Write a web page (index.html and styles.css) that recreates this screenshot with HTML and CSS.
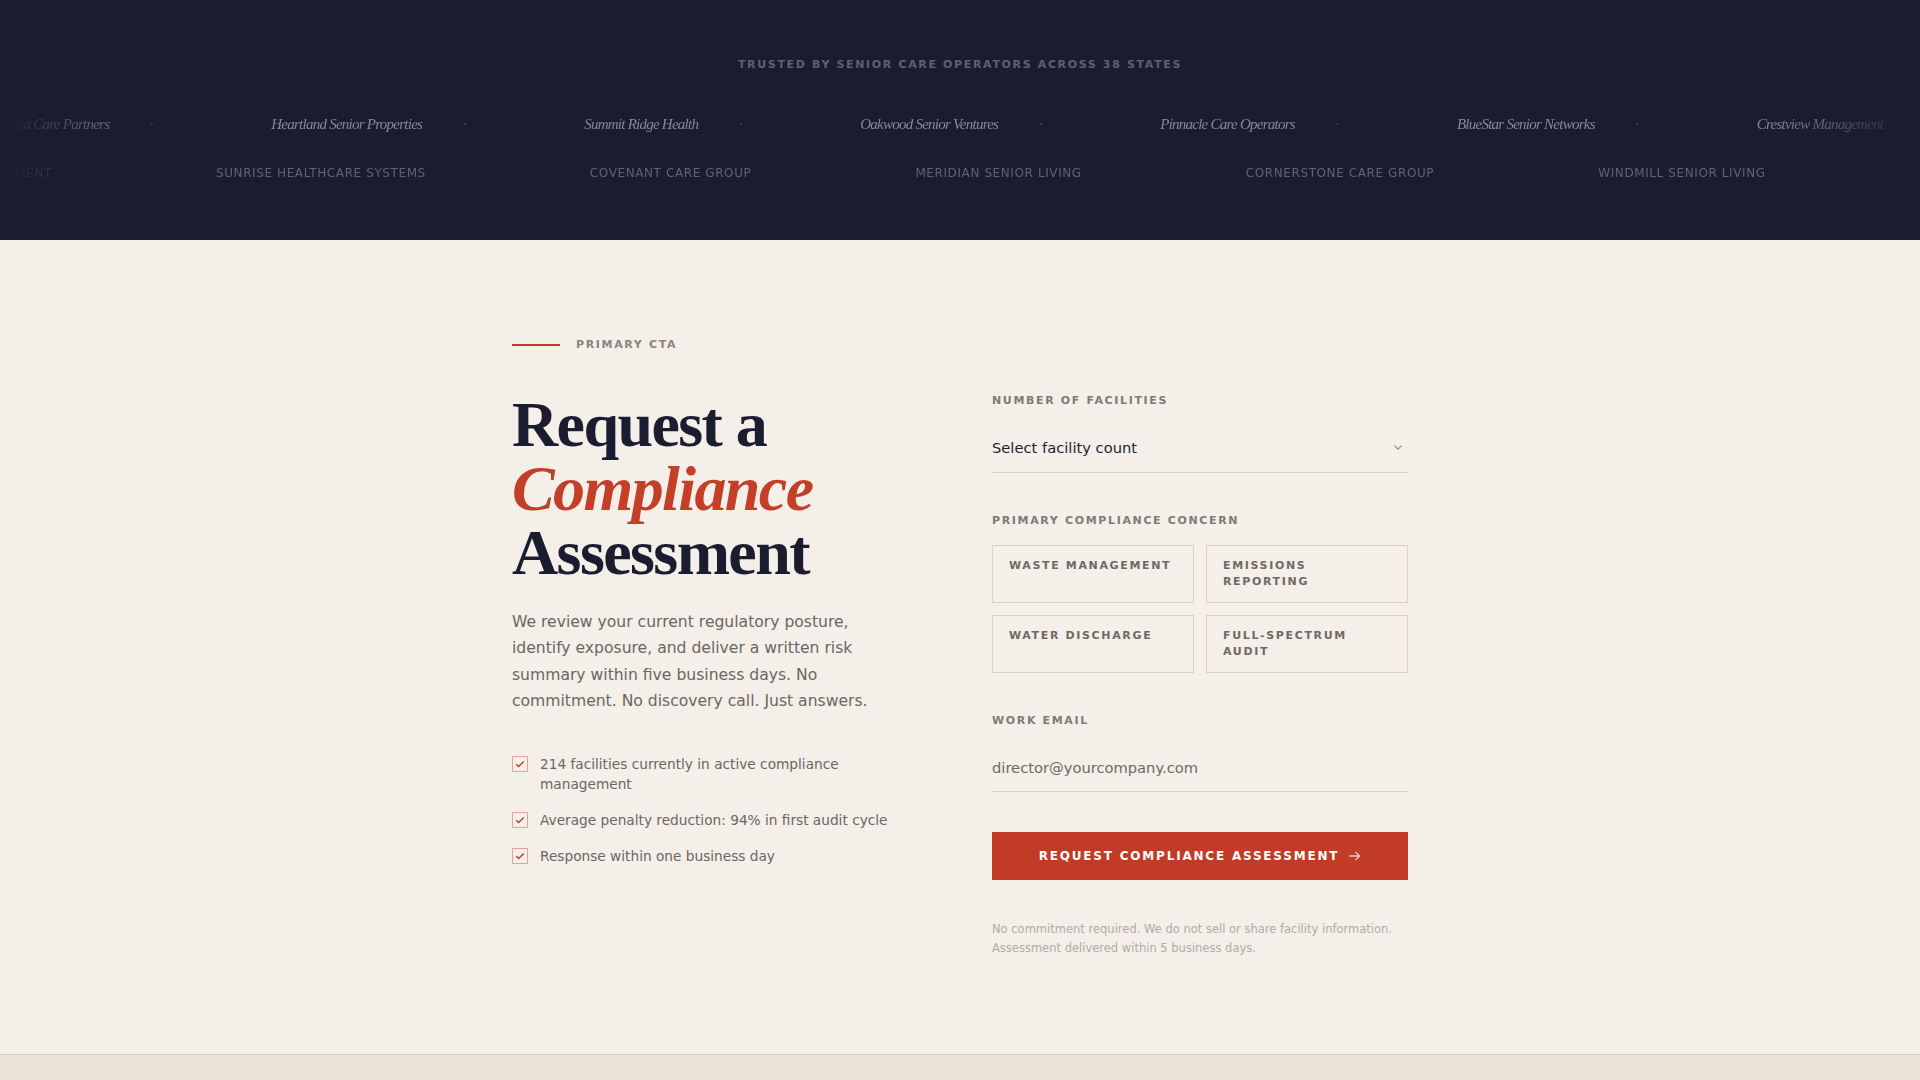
FILE: index.html
```html
<!DOCTYPE html>
<html lang="en">
<head>
  <meta charset="UTF-8">
  <meta name="viewport" content="width=device-width, initial-scale=1.0">
  <title>Request a Compliance Assessment</title>
  <link rel="stylesheet" href="styles.css">
</head>
<body>
  <section class="trust">
    <p class="trust-label">Trusted by senior care operators across 38 states</p>

    <div class="marquee">
      <div class="marquee-track track-serif">
        <span class="logo-serif">Magnolia Care Partners</span><span class="sep">·</span>
        <span class="logo-serif">Heartland Senior Properties</span><span class="sep">·</span>
        <span class="logo-serif">Summit Ridge Health</span><span class="sep">·</span>
        <span class="logo-serif">Oakwood Senior Ventures</span><span class="sep">·</span>
        <span class="logo-serif">Pinnacle Care Operators</span><span class="sep">·</span>
        <span class="logo-serif">BlueStar Senior Networks</span><span class="sep">·</span>
        <span class="logo-serif">Crestview Management</span><span class="sep">·</span>
        <span class="logo-serif">Magnolia Care Partners</span><span class="sep">·</span>
      </div>
    </div>

    <div class="marquee">
      <div class="marquee-track track-caps">
        <span class="logo-caps">Harborview Management</span>
        <span class="logo-caps">Sunrise Healthcare Systems</span>
        <span class="logo-caps">Covenant Care Group</span>
        <span class="logo-caps">Meridian Senior Living</span>
        <span class="logo-caps">Cornerstone Care Group</span>
        <span class="logo-caps">Windmill Senior Living</span>
        <span class="logo-caps">Harborview Management</span>
      </div>
    </div>
  </section>

  <section class="cta">
    <div class="cta-inner">
      <div class="eyebrow"><span class="eyebrow-line"></span>Primary CTA</div>

      <div class="cta-grid">
        <div class="cta-copy">
          <h1 class="cta-title">Request a<br><em>Compliance</em><br>Assessment</h1>
          <p class="cta-lead">We review your current regulatory posture, identify exposure, and deliver a written risk summary within five business days. No commitment. No discovery call. Just answers.</p>

          <ul class="checklist">
            <li>
              <span class="check"><svg width="10" height="10" viewBox="0 0 10 10"><path d="M1.2 5.3l2.4 2.3L8.8 2.4" fill="none" stroke="#c13b27" stroke-width="1.4"/></svg></span>
              214 facilities currently in active compliance management
            </li>
            <li>
              <span class="check"><svg width="10" height="10" viewBox="0 0 10 10"><path d="M1.2 5.3l2.4 2.3L8.8 2.4" fill="none" stroke="#c13b27" stroke-width="1.4"/></svg></span>
              Average penalty reduction: 94% in first audit cycle
            </li>
            <li>
              <span class="check"><svg width="10" height="10" viewBox="0 0 10 10"><path d="M1.2 5.3l2.4 2.3L8.8 2.4" fill="none" stroke="#c13b27" stroke-width="1.4"/></svg></span>
              Response within one business day
            </li>
          </ul>
        </div>

        <form class="cta-form" onsubmit="return false">
          <div class="field">
            <label class="field-label" for="facilities">Number of facilities</label>
            <div class="select-wrap">
              <select id="facilities">
                <option>Select facility count</option>
                <option>1 – 5</option>
                <option>6 – 20</option>
                <option>21 – 50</option>
                <option>50+</option>
              </select>
              <svg width="8" height="5" viewBox="0 0 8 5"><path d="M0.5 0.6L4 4.1L7.5 0.6" fill="none" stroke="#8a857f" stroke-width="1.1"/></svg>
            </div>
          </div>

          <div class="field">
            <span class="field-label">Primary compliance concern</span>
            <div class="options">
              <label class="option"><input type="radio" name="concern">Waste management</label>
              <label class="option"><input type="radio" name="concern">Emissions reporting</label>
              <label class="option"><input type="radio" name="concern">Water discharge</label>
              <label class="option"><input type="radio" name="concern">Full-spectrum audit</label>
            </div>
          </div>

          <div class="field">
            <label class="field-label" for="email">Work email</label>
            <input class="text-input" id="email" type="email" placeholder="director@yourcompany.com">
          </div>

          <button class="submit" type="submit">
            Request compliance assessment
            <svg width="12" height="10" viewBox="0 0 12 10"><path d="M0.5 5h10M6.5 1l4 4-4 4" fill="none" stroke="currentColor" stroke-width="1.3"/></svg>
          </button>

          <p class="fine-print">No commitment required. We do not sell or share facility information. Assessment delivered within 5 business days.</p>
        </form>
      </div>
    </div>
  </section>

  <footer class="site-footer"></footer>
</body>
</html>
```

FILE: styles.css
```css
* {
  box-sizing: border-box;
}
body {
  margin: 0;
  font-family: "DejaVu Sans", sans-serif;
  background: #f4efe9;
  color: #1c1d31;
}

/* logo strip */
.trust {
  background: #1b1c2e;
  padding: 57px 0 55px;
  text-align: center;
  overflow: hidden;
}
.trust-label {
  margin: 0 0 39px;
  font-size: 11px;
  line-height: 16px;
  font-weight: 700;
  letter-spacing: 0.15em;
  text-transform: uppercase;
  color: #5e6073;
}
.marquee {
  overflow: hidden;
  -webkit-mask-image: linear-gradient(90deg, transparent 0, #000 8%, #000 92%, transparent 100%);
  mask-image: linear-gradient(90deg, transparent 0, #000 8%, #000 92%, transparent 100%);
}
.marquee + .marquee {
  margin-top: 25px;
}
.marquee-track {
  display: flex;
  align-items: center;
  width: max-content;
  white-space: nowrap;
}
.track-serif {
  transform: translateX(-22px);
}
.track-caps {
  gap: 164px;
  transform: translateX(-133px);
}
.logo-serif {
  font-family: "Liberation Serif", serif;
  font-style: italic;
  font-size: 15px;
  line-height: 24px;
  letter-spacing: -0.05em;
  color: #87889a;
}
.sep {
  margin: 0 117px 0 40px;
  font-family: "Liberation Serif", serif;
  font-size: 15px;
  line-height: 24px;
  color: #4a4b5d;
}
.logo-caps {
  font-size: 12px;
  line-height: 24px;
  letter-spacing: 0.05em;
  text-transform: uppercase;
  color: #616375;
}

/* assessment request */
.cta {
  padding: 97px 0 96px;
}
.cta-inner {
  max-width: 896px;
  margin: 0 auto;
}
.eyebrow {
  display: flex;
  align-items: center;
  gap: 16px;
  margin-bottom: 40px;
  font-size: 11px;
  line-height: 16px;
  font-weight: 700;
  letter-spacing: 0.15em;
  text-transform: uppercase;
  color: #8a847d;
}
.eyebrow-line {
  width: 48px;
  height: 2px;
  background: #c13b27;
}
.cta-grid {
  display: grid;
  grid-template-columns: 1fr 1fr;
  gap: 64px;
  align-items: start;
}
.cta-title {
  margin: 0;
  font-family: "Liberation Serif", serif;
  font-size: 64px;
  line-height: 1;
  font-weight: 700;
  letter-spacing: -0.025em;
  color: #1b1c30;
}
.cta-title em {
  color: #c33f28;
}
.cta-lead {
  max-width: 384px;
  margin: 24px 0 0;
  font-size: 15.6px;
  line-height: 26.4px;
  color: #6b6661;
}
.checklist {
  list-style: none;
  margin: 39px 0 0;
  padding: 0;
  display: flex;
  flex-direction: column;
  gap: 16px;
}
.checklist li {
  display: flex;
  align-items: flex-start;
  gap: 12px;
  font-size: 13.7px;
  line-height: 20px;
  color: #6b6661;
}
.check {
  flex: none;
  width: 16px;
  height: 16px;
  margin-top: 2px;
  border: 1px solid #e2a597;
  display: flex;
  align-items: center;
  justify-content: center;
}

/* form */
.field {
  margin-bottom: 40px;
}
.field-label {
  display: block;
  margin-bottom: 16px;
  font-size: 11px;
  line-height: 16px;
  font-weight: 700;
  letter-spacing: 0.15em;
  text-transform: uppercase;
  color: #7f7a74;
}
.select-wrap {
  display: flex;
  align-items: center;
  padding-bottom: 2px;
  border-bottom: 1px solid #d8d2c9;
}
.select-wrap select {
  flex: 1;
  height: 45px;
  padding: 0;
  border: 0;
  background: transparent;
  -webkit-appearance: none;
  appearance: none;
  font-family: inherit;
  font-size: 14.7px;
  color: #1e1f2f;
  outline: none;
}
.select-wrap svg {
  margin-right: 6px;
}
.options {
  display: grid;
  grid-template-columns: 1fr 1fr;
  gap: 12px;
}
.option {
  display: block;
  padding: 12px 16px;
  border: 1px solid #d8d2c9;
  font-size: 11px;
  line-height: 16px;
  font-weight: 700;
  letter-spacing: 0.15em;
  text-transform: uppercase;
  color: #6e6964;
  cursor: pointer;
}
.option input {
  display: none;
}
.text-input {
  display: block;
  width: 100%;
  height: 47px;
  padding: 0 0 2px;
  border: 0;
  border-bottom: 1px solid #d8d2c9;
  background: transparent;
  font-family: inherit;
  font-size: 14.7px;
  color: #1e1f2f;
  outline: none;
}
.text-input::placeholder {
  color: #6e6964;
}
.submit {
  width: 100%;
  display: flex;
  align-items: center;
  justify-content: center;
  gap: 10px;
  padding: 16px 24px;
  border: 0;
  background: #c13b27;
  color: #fff;
  font-family: inherit;
  font-size: 12px;
  line-height: 16px;
  font-weight: 700;
  letter-spacing: 0.15em;
  text-transform: uppercase;
  cursor: pointer;
}
.submit svg {
  color: rgba(255, 255, 255, 0.75);
}
.fine-print {
  margin: 40px 0 0;
  font-size: 11.5px;
  line-height: 19px;
  color: #b1aba4;
}

.site-footer {
  height: 160px;
  background: #ebe4d6;
  border-top: 1px solid #d6cec1;
}
```
